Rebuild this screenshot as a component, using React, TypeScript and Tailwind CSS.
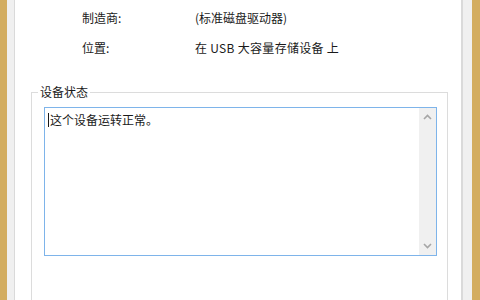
import React from 'react';

const font = { fontFamily: '"Noto Sans CJK SC", "Noto Sans", sans-serif' };

const App: React.FC = () => {
  return (
    <div className="flex h-[300px] w-[480px] overflow-hidden bg-white text-[12px] text-[#1a1a1a]" style={font}>
      {/* window frame left */}
      <div className="w-[7px] bg-[#d3ad60]"></div>
      <div className="w-[8px] bg-[#f0f0f0] border-r border-[#dadada]"></div>

      {/* content panel */}
      <div className="flex flex-1 flex-col bg-white">
        <div className="h-[3px]"></div>
        <div className="flex h-[30px] items-center pl-[67px]">
          <span className="w-[113px]">制造商:</span>
          <span>(标准磁盘驱动器)</span>
        </div>
        <div className="flex h-[30px] items-center pl-[67px]">
          <span className="w-[113px]">位置:</span>
          <span className="tracking-[0.3px]">在 USB 大容量存储设备 上</span>
        </div>

        {/* group box */}
        <div className="relative ml-[16px] mr-[13px] mt-[29px] flex-1 border border-b-0 border-[#dcdcdc] pl-[12px] pr-[10px] pt-[14px]">
          <span className="absolute left-[6px] top-[-10px] bg-white px-[2px] leading-[18px]">设备状态</span>
          <div className="flex h-[149px] border border-[#7eb4ea]">
            <div className="flex flex-1 items-start pl-[3px] pt-[4px]">
              <span className="mt-[1px] mr-[1px] h-[14px] w-px bg-[#1a1a1a]"></span>
              <span className="leading-[16px]">这个设备运转正常。</span>
            </div>
            <div className="flex w-[17px] flex-col items-center justify-between bg-[#f0f0f0] py-[6px]">
              <svg width="9" height="6" viewBox="0 0 9 6">
                <path d="M1 5 L4.5 1.5 L8 5" fill="none" stroke="#a6a6a6" strokeWidth="1.6" />
              </svg>
              <svg width="9" height="6" viewBox="0 0 9 6">
                <path d="M1 1 L4.5 4.5 L8 1" fill="none" stroke="#a6a6a6" strokeWidth="1.6" />
              </svg>
            </div>
          </div>
        </div>
      </div>

      {/* window frame right */}
      <div className="w-[11px] bg-[#f0f0f0] border-l-2 border-[#dadada]"></div>
      <div className="w-[8px] bg-[#d3ad60]"></div>
    </div>
  );
};

export default App;
